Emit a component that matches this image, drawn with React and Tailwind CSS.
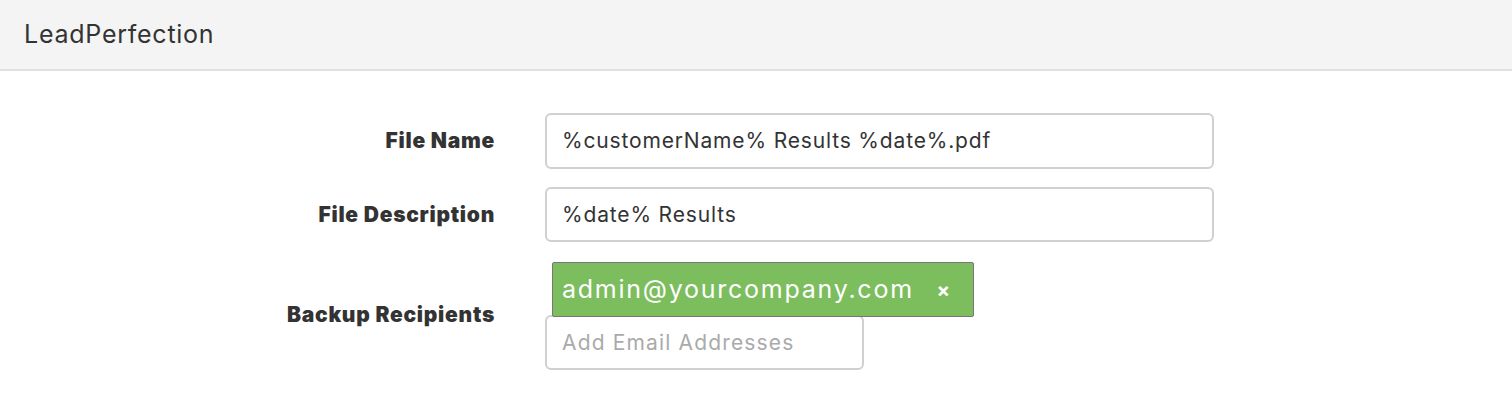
export default function App() {
  const font = { fontFamily: "Inter, 'Noto Sans', sans-serif" };
  return (
    <div className="min-h-[408px] bg-white text-[#333]" style={font}>
      <div className="h-[71px] bg-[#f4f4f4] border-b-2 border-[#e0e0e0] flex items-center px-6">
        <span className="text-[25px] tracking-[0.03em] text-[#333]">LeadPerfection</span>
      </div>

      <div className="pt-[42px] flex flex-col gap-[18px]">
        <div className="flex items-center gap-[50px]">
          <label className="w-[495px] text-right text-[21px] font-black tracking-[0.035em]">File Name</label>
          <div className="w-[669px] h-[56px] border-2 border-[#d0d0d0] rounded-[6px] flex items-center pl-[15px] text-[21px] tracking-[0.04em]">
            %customerName% Results %date%.pdf
          </div>
        </div>

        <div className="flex items-center gap-[50px]">
          <label className="w-[495px] text-right text-[21px] font-black tracking-[0.035em]">File Description</label>
          <div className="w-[669px] h-[55px] border-2 border-[#d0d0d0] rounded-[6px] flex items-center pl-[15px] text-[21px] tracking-[0.04em]">
            %date% Results
          </div>
        </div>

        <div className="flex items-center gap-[50px] mt-[2px]">
          <label className="w-[495px] text-right text-[21px] font-black tracking-[0.035em] -mt-[3px]">Backup Recipients</label>
          <div className="flex flex-col items-start">
            <div className="ml-[7px] -mb-[2px] relative z-10 w-[422px] h-[55px] bg-[#7cbd5e] border border-[#777] rounded-[2px] flex items-center justify-between pl-[9px] pr-[23px] text-white">
              <span className="text-[25px] tracking-[0.07em]">admin@yourcompany.com</span>
              <span className="text-[20px] font-bold">×</span>
            </div>
            <div className="w-[319px] h-[55px] border-2 border-[#d0d0d0] rounded-[6px] flex items-center pl-[15px] text-[21px] tracking-[0.055em] text-[#aaa]">
              Add Email Addresses
            </div>
          </div>
        </div>
      </div>
    </div>
  );
}
